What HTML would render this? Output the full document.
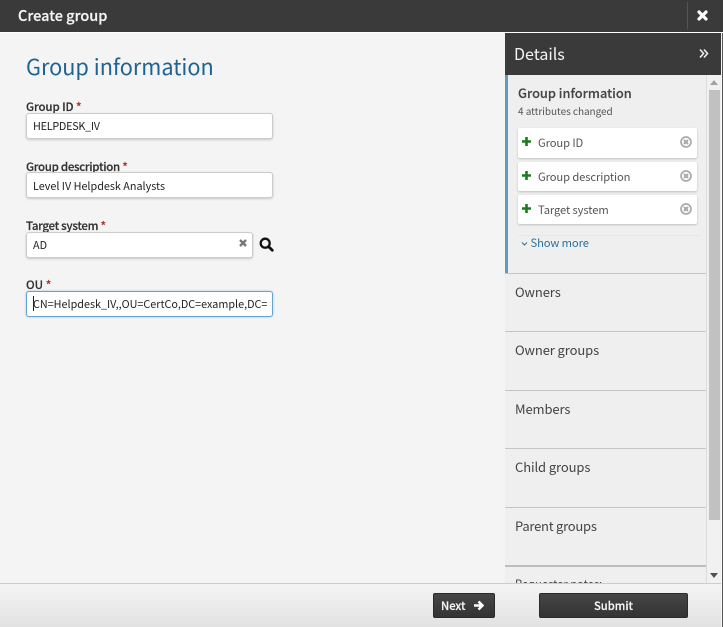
<!DOCTYPE html>
<html><head><meta charset="utf-8"><style>
*{box-sizing:border-box}
html,body{margin:0;padding:0}
body{width:723px;height:627px;position:relative;overflow:hidden;background:#f4f4f4;font-family:"Noto Sans CJK SC","Liberation Sans",sans-serif;color:#333}
.a{position:absolute;white-space:nowrap}
.lbl{left:26px;font-size:11.5px;font-weight:500;color:#333;line-height:14px;height:14px;-webkit-text-stroke:.2px #333}
.lbl b{color:#a33;font-weight:500;-webkit-text-stroke:.2px #a33}
.inp{left:26px;width:247px;height:26px;background:#fff;border:1px solid #ccc;border-radius:3px;box-shadow:0 1px 2px rgba(0,0,0,.18);font-size:10.8px;line-height:24px;padding-left:6px;color:#222;overflow:hidden}
.item{left:518px;width:179px;height:30px;background:#fff;border-radius:2px;box-shadow:0 1px 2px rgba(0,0,0,.2)}
.itxt{left:538px;font-size:11.2px;color:#555;line-height:14px;letter-spacing:-.1px}
.sec{left:515px;font-size:13px;color:#444;line-height:16px;letter-spacing:-.1px}
.line{left:505px;width:202px;height:1px;background:#c4c4c4}
.btn{background:linear-gradient(#474747,#3d3d3d 45%,#343434);border:1px solid #2a2a2a;border-radius:2px}
</style></head><body>
<div class="a" style="left:0;top:0;width:723px;height:32px;background:#3a3a3a"></div>
<div class="a" style="left:18px;top:6px;font-size:14.5px;font-weight:500;color:#f4f4f4;line-height:20px;-webkit-text-stroke:.2px #f4f4f4">Create group</div>
<div class="a" style="left:687px;top:2px;width:1px;height:27px;background:#555"></div>
<svg class="a" style="left:697px;top:10px" width="11" height="11" viewBox="0 0 11 11"><path d="M2 2L9 9M9 2L2 9" stroke="#fff" stroke-width="3.2" stroke-linecap="round"/></svg>
<div class="a" style="left:0;top:32px;width:723px;height:1px;background:#fff"></div>

<div class="a" style="left:26px;top:51px;font-size:21.7px;color:#1f6392;line-height:32px">Group information</div>

<div class="a lbl" style="top:100px;letter-spacing:-.1px">Group ID <b>*</b></div>
<div class="a inp" style="top:113px;letter-spacing:-.25px">HELPDESK_IV</div>
<div class="a lbl" style="top:160px;letter-spacing:-.3px">Group description <b>*</b></div>
<div class="a inp" style="top:172px;line-height:26px">Level IV Helpdesk Analysts</div>
<div class="a lbl" style="top:219px;letter-spacing:-.3px">Target system <b>*</b></div>
<div class="a inp" style="top:232px;width:227px">AD</div>
<svg class="a" style="left:238px;top:238px" width="10" height="10" viewBox="0 0 10 10"><path d="M2 2L8 8M8 2L2 8" stroke="#777" stroke-width="2.4"/></svg>
<svg class="a" style="left:259px;top:237px" width="15" height="15" viewBox="0 0 15 15"><circle cx="6.2" cy="6.2" r="4.5" fill="none" stroke="#111" stroke-width="2.3"/><path d="M9.7 9.7L13.3 13.3" stroke="#111" stroke-width="2.8" stroke-linecap="round"/></svg>
<div class="a lbl" style="top:278px">OU <b>*</b></div>
<div class="a inp" style="top:291px;border-color:#66a3cf;box-shadow:0 0 2px rgba(80,150,210,.5)">CN=Helpdesk_IV,,OU=CertCo,DC=example,DC=</div>
<div class="a" style="left:33px;top:296px;width:1px;height:15px;background:#222"></div>

<!-- panel -->
<div class="a" style="left:505px;top:33px;width:216px;height:550px;background:#efefef"></div>
<div class="a" style="left:505px;top:33px;width:216px;height:42px;background:#3a3a3a"></div>
<div class="a" style="left:514px;top:42px;font-size:16px;color:#f4f4f4;line-height:22px">Details</div>
<svg class="a" style="left:699px;top:48px" width="10" height="12" viewBox="0 0 10 12"><path d="M1 1.5L4.5 5.5L1 9.5M5 1.5L8.5 5.5L5 9.5" fill="none" stroke="#e8eef4" stroke-width="1.6"/></svg>
<div class="a" style="left:505px;top:75px;width:3px;height:198px;background:#6199c2"></div>
<div class="a" style="left:518px;top:84px;font-size:12.8px;font-weight:500;color:#444;line-height:17px;-webkit-text-stroke:.15px #444">Group information</div>
<div class="a" style="left:518px;top:104px;font-size:10px;color:#555;line-height:14px;letter-spacing:-.05px">4 attributes changed</div>

<div class="a item" style="top:128px"></div>
<div class="a item" style="top:162px;height:29px"></div>
<div class="a item" style="top:195px;height:29px"></div>
<svg class="a" style="left:522px;top:137px" width="9" height="9"><path d="M4.5 0V9M0 4.5H9" stroke="#1c7c1c" stroke-width="2.6"/></svg>
<svg class="a" style="left:522px;top:171px" width="9" height="9"><path d="M4.5 0V9M0 4.5H9" stroke="#1c7c1c" stroke-width="2.6"/></svg>
<svg class="a" style="left:522px;top:204px" width="9" height="9"><path d="M4.5 0V9M0 4.5H9" stroke="#1c7c1c" stroke-width="2.6"/></svg>
<div class="a itxt" style="top:136px">Group ID</div>
<div class="a itxt" style="top:170px">Group description</div>
<div class="a itxt" style="top:203px">Target system</div>
<svg class="a" style="left:680px;top:136px" width="12" height="12" viewBox="0 0 12 12"><circle cx="6" cy="6" r="5" fill="none" stroke="#aaa" stroke-width="1.7"/><path d="M4 4L8 8M8 4L4 8" stroke="#aaa" stroke-width="2.2"/></svg>
<svg class="a" style="left:680px;top:170px" width="12" height="12" viewBox="0 0 12 12"><circle cx="6" cy="6" r="5" fill="none" stroke="#aaa" stroke-width="1.7"/><path d="M4 4L8 8M8 4L4 8" stroke="#aaa" stroke-width="2.2"/></svg>
<svg class="a" style="left:680px;top:203px" width="12" height="12" viewBox="0 0 12 12"><circle cx="6" cy="6" r="5" fill="none" stroke="#aaa" stroke-width="1.7"/><path d="M4 4L8 8M8 4L4 8" stroke="#aaa" stroke-width="2.2"/></svg>
<div class="a" style="left:518px;top:235px;width:183px;height:1px;background:#e8e8e8"></div>
<svg class="a" style="left:521px;top:241px" width="7" height="6"><path d="M1 1.5L3.5 4L6 1.5" fill="none" stroke="#2a6f9e" stroke-width="1"/></svg>
<div class="a" style="left:530.5px;top:236px;font-size:11.2px;color:#2a6f9e;line-height:14px;letter-spacing:-.1px">Show more</div>

<div class="a line" style="top:273px"></div>
<div class="a sec" style="top:284px">Owners</div>
<div class="a line" style="top:331px"></div>
<div class="a sec" style="top:342px">Owner groups</div>
<div class="a line" style="top:390px"></div>
<div class="a sec" style="top:401px">Members</div>
<div class="a line" style="top:448px"></div>
<div class="a sec" style="top:459px">Child groups</div>
<div class="a line" style="top:507px"></div>
<div class="a sec" style="top:518px;letter-spacing:-.25px">Parent groups</div>
<div class="a line" style="top:565px;height:2px;background:#bdbdbd"></div>
<div class="a" style="left:515px;top:577px;font-size:11.2px;color:#444;line-height:14px">Requester notes:</div>

<!-- scrollbar -->
<div class="a" style="left:706px;top:75px;width:15px;height:508px;background:#f1f1f1;border-left:1px solid #ddd"></div>
<div class="a" style="left:709px;top:90px;width:11px;height:430px;background:#c1c1c1"></div>
<svg class="a" style="left:710px;top:80px" width="8" height="5"><path d="M4 0L8 5H0Z" fill="#a3a3a3"/></svg>
<svg class="a" style="left:710px;top:573px" width="8" height="5"><path d="M0 0H8L4 5Z" fill="#505050"/></svg>
<div class="a" style="left:721px;top:33px;width:1px;height:594px;background:#f8f8f8"></div>
<div class="a" style="left:722px;top:33px;width:1px;height:594px;background:#555"></div>

<!-- footer -->
<div class="a" style="left:0;top:583px;width:721px;height:44px;background:linear-gradient(#f4f4f4,#e2e2e2);border-top:1px solid #ccc"></div>
<div class="a btn" style="left:433px;top:593px;width:62px;height:25px"></div>
<div class="a" style="left:441px;top:599px;font-size:11.2px;font-weight:500;color:#f4f4f4;line-height:15px;-webkit-text-stroke:.2px #f4f4f4">Next</div>
<svg class="a" style="left:473px;top:600px" width="11" height="11" viewBox="0 0 11 11"><path d="M1 5.5H9M5.5 1.5L9.5 5.5L5.5 9.5" fill="none" stroke="#fff" stroke-width="2.5"/></svg>
<div class="a btn" style="left:539px;top:593px;width:149px;height:25px;color:#f4f4f4;font-size:11.2px;font-weight:500;text-align:center;line-height:25px;-webkit-text-stroke:.2px #f4f4f4">Submit</div>
</body></html>
